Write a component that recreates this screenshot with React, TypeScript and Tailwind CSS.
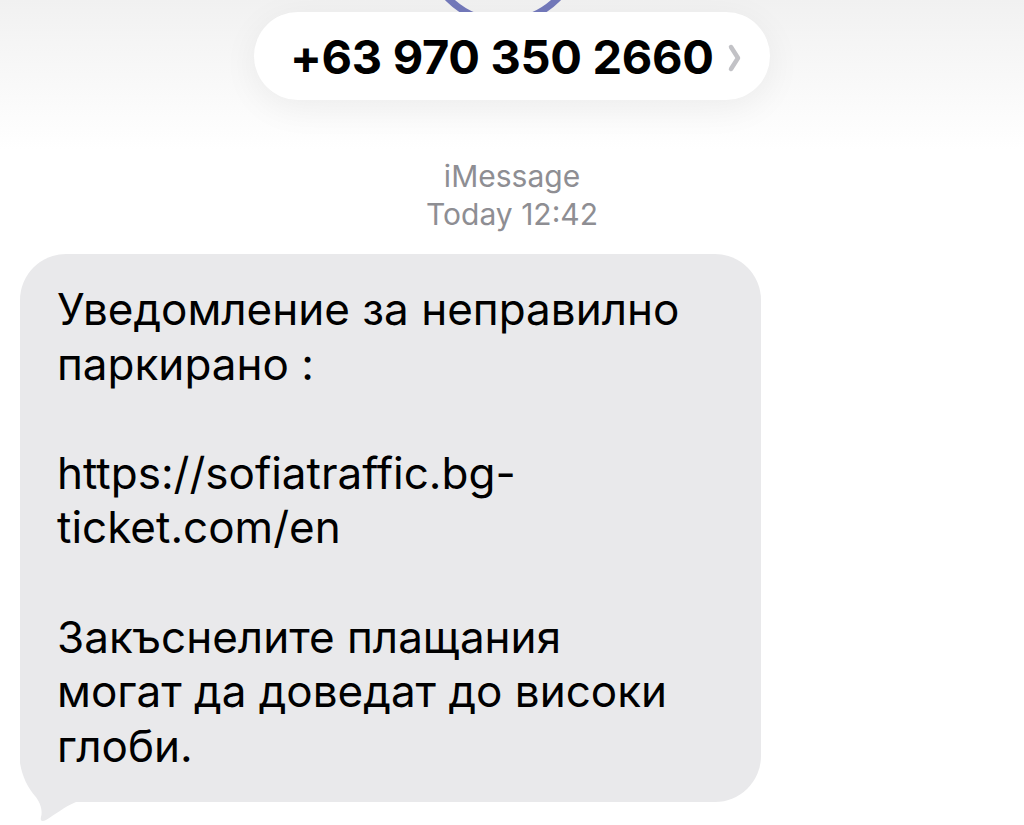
export default function App() {
  return (
    <div className="relative w-[1024px] h-[825px] overflow-hidden bg-white font-['Inter','Liberation_Sans',sans-serif]">
      {/* soft header shading */}
      <div className="absolute inset-x-0 top-0 h-[150px] bg-gradient-to-b from-[#f1f1f1] via-[#f8f8f8] to-white" />

      {/* avatar ring, cut off by the top edge */}
      <div className="absolute left-[423px] top-[-135px] w-[160px] h-[160px] rounded-full border-[7px] border-[#7379bb]" />

      <div className="relative flex flex-col items-center">
        {/* contact pill */}
        <div className="mt-[12px] flex items-center h-[88px] w-[516px] rounded-full bg-white shadow-[0_8px_36px_rgba(0,0,0,0.06)] pl-[36px] gap-[13px]">
          <span className="text-[47px] font-bold tracking-[-0.3px] text-black leading-none">
            +63 970 350 2660
          </span>
          <svg width="16" height="30" viewBox="0 0 16 30" className="mt-[4px]">
            <path d="M4 4 L11 15 L4 26" fill="none" stroke="#c2c2c6" strokeWidth="4.5" strokeLinecap="round" strokeLinejoin="round" />
          </svg>
        </div>

        {/* service + time */}
        <div className="mt-[57px] flex flex-col items-center text-[30px] leading-[38px] text-[#8e8e93]">
          <span>iMessage</span>
          <span>Today 12:42</span>
        </div>
      </div>

      {/* message bubble */}
      <div className="absolute left-[20px] top-[254px] w-[741px]">
        {/* tail sits behind the bubble body */}
        <svg width="80" height="80" viewBox="0 0 80 80" className="absolute left-0 bottom-[-22px]">
          <path
            d="M0 0 L0 19 C2 32 8 44 15 52 C20 58 23 66 21 73 C20 77 22 78 26 76 C36 70 44 63 56 58 L80 58 L80 0 Z"
            fill="#e9e9eb"
          />
        </svg>
        <div lang="bg" className="relative rounded-[46px] bg-[#e9e9eb] pl-[37px] pr-[30px] pt-[28px] pb-[29px] text-[44px] leading-[54.6px] text-black">
          <p>Уведомление за неправилно</p>
          <p>паркирано :</p>
          <p>&nbsp;</p>
          <p>https://sofiatraffic.bg-</p>
          <p>ticket.com/en</p>
          <p>&nbsp;</p>
          <p>Закъснелите плащания</p>
          <p>могат да доведат до високи</p>
          <p>глоби.</p>
        </div>
      </div>
    </div>
  )
}
